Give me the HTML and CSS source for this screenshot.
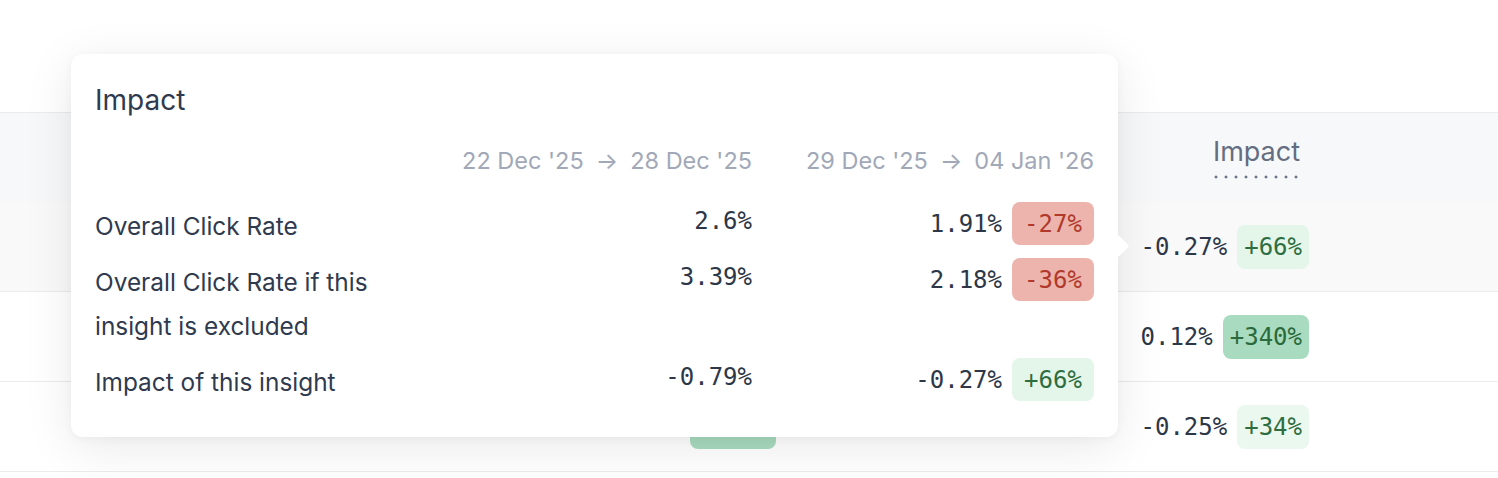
FILE: index.html
```html
<!DOCTYPE html>
<html>
<head>
<meta charset="utf-8">
<link rel="stylesheet" href="styles.css">
</head>
<body>
<div class="page">
  <div class="table">
    <div class="trow thead">
      <div class="cell"></div>
      <div class="cell"></div>
      <div class="cell"></div>
      <div class="cell impact-h"><span class="dotted">Impact</span></div>
      <div class="cell"></div>
    </div>
    <div class="trow hover">
      <div class="cell"></div>
      <div class="cell mid"></div>
      <div class="cell"></div>
      <div class="cell val"><span class="mono">-0.27%</span><span class="badge g-light">+66%</span></div>
      <div class="cell"></div>
    </div>
    <div class="trow">
      <div class="cell"></div>
      <div class="cell mid"></div>
      <div class="cell"></div>
      <div class="cell val"><span class="mono">0.12%</span><span class="badge g-strong">+340%</span></div>
      <div class="cell"></div>
    </div>
    <div class="trow">
      <div class="cell"></div>
      <div class="cell mid"><span class="badge g-strong">+340%</span></div>
      <div class="cell"></div>
      <div class="cell val"><span class="mono">-0.25%</span><span class="badge g-light2">+34%</span></div>
      <div class="cell"></div>
    </div>
  </div>

  <div class="tip">
    <div class="tip-title">Impact</div>
    <div class="tip-grid">
      <div></div>
      <div class="range">22 Dec '25<span class="arrow">→</span>28 Dec '25</div>
      <div class="range">29 Dec '25<span class="arrow">→</span>04 Jan '26</div>

      <div class="label">Overall Click Rate</div>
      <div class="n1 mono">2.6%</div>
      <div class="n2"><span class="mono">1.91%</span><span class="badge tb red">-27%</span></div>

      <div class="label">Overall Click Rate if this insight is excluded</div>
      <div class="n1 mono">3.39%</div>
      <div class="n2"><span class="mono">2.18%</span><span class="badge tb red">-36%</span></div>

      <div class="label">Impact of this insight</div>
      <div class="n1 mono">-0.79%</div>
      <div class="n2"><span class="mono">-0.27%</span><span class="badge tb g-light">+66%</span></div>
    </div>
    <div class="tip-arrow"></div>
  </div>
</div>
</body>
</html>
```

FILE: styles.css
```css
html, body {
  margin: 0;
  padding: 0;
  background: #ffffff;
}
body {
  font-family: "Inter", "Noto Sans", sans-serif;
  color: #2f3a4e;
}
.page {
  position: relative;
  width: 1498px;
  height: 478px;
  overflow: hidden;
  padding-top: 112px;
  box-sizing: border-box;
}
.table {
  border-top: 1px solid #ebebec;
}
.trow {
  display: grid;
  grid-template-columns: 600px 176px 1fr 200px 189px;
  height: 89px;
  border-bottom: 1px solid #ebebec;
  align-items: center;
}
.thead {
  background: #f7f8fa;
  border-bottom: none;
  height: 89px;
}
.hover {
  background: #f9f9fa;
}
.mono {
  font-family: "DejaVu Sans Mono", "Liberation Mono", monospace;
  font-size: 24px;
  color: #2d3748;
}
.impact-h {
  display: flex;
  justify-content: flex-end;
  padding-right: 8px;
  align-self: start;
  padding-top: 22px;
}
.dotted {
  font-size: 27px;
  color: #656d80;
  line-height: 34px;
  padding: 0 1px 10px 2px;
  background-image: radial-gradient(circle, #6b7386 1.3px, transparent 1.7px);
  background-size: 10px 4px;
  background-repeat: round no-repeat;
  background-position: 0 100%;
}
.val, .mid {
  display: flex;
  justify-content: flex-end;
  align-items: center;
  gap: 10px;
}
.badge {
  display: inline-flex;
  align-items: center;
  justify-content: center;
  height: 44px;
  padding: 0 7px;
  border-radius: 8px;
  font-family: "DejaVu Sans Mono", "Liberation Mono", monospace;
  font-size: 24px;
  box-sizing: border-box;
}
.badge.tb {
  height: 43px;
  min-width: 82px;
}
.red { background: #ecb4ad; color: #b0392c; }
.g-light { background: #e3f6e9; color: #2e6d40; }
.g-light2 { background: #ebf8ef; color: #2e6d40; }
.g-strong { background: #a8dbbf; color: #2a6a3d; }

.tip {
  position: absolute;
  left: 71px;
  top: 54px;
  width: 1047px;
  box-sizing: border-box;
  padding: 30px 24px 33px;
  background: #ffffff;
  border-radius: 12px;
  box-shadow: 0 10px 50px rgba(0, 0, 0, 0.09), 0 2px 8px rgba(0, 0, 0, 0.04);
}
.tip-title {
  font-size: 28px;
  line-height: 32px;
  color: #2f3a4e;
  margin-bottom: 30px;
}
.tip-grid {
  display: grid;
  grid-template-columns: 1fr 294px 293px;
  column-gap: 49px;
  row-gap: 10px;
  align-items: start;
}
.range {
  font-size: 23.5px;
  line-height: 30px;
  color: #a1a8b7;
  text-align: right;
  white-space: nowrap;
  margin-bottom: 16px;
}
.arrow {
  margin: 0 12px;
}
.label {
  font-size: 24.4px;
  line-height: 44px;
  padding-top: 2px;
  color: #2f3a4e;
}
.n1 {
  text-align: right;
  line-height: 38px;
}
.n2 {
  display: flex;
  justify-content: flex-end;
  align-items: center;
  gap: 10px;
  height: 43px;
}
.tip-arrow {
  position: absolute;
  right: -8px;
  top: 184px;
  width: 16px;
  height: 16px;
  background: #ffffff;
  transform: rotate(45deg);
  border-radius: 2px;
}
```
